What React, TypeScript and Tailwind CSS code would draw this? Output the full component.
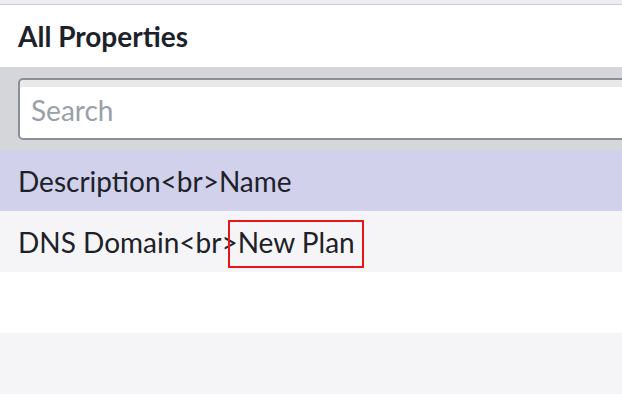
import React from 'react';

const rows = [
  { text: 'Description<br>Name', selected: true },
  { text: 'DNS Domain<br>', highlight: 'New Plan' },
  { text: '' },
  { text: '' },
];

export default function App() {
  return (
    <div
      className="w-[622px] h-[414px] overflow-hidden bg-white text-[#1d2129]"
      style={{ fontFamily: 'Lato, "Noto Sans", sans-serif' }}
    >
      <div className="h-[4px] bg-[#eeeef2] border-b border-[#c9ccd2] box-content" />
      <div className="h-[62px] flex items-center px-[18px]">
        <h2 className="text-[28px] leading-[34px] font-bold">All Properties</h2>
      </div>
      <div className="bg-[#d5d6da] pl-[18px] pt-[11px] pb-[10px]">
        <div className="h-[62px] -mr-[10px] bg-white border-2 border-[#8a9099] rounded-[5px] shadow-[inset_0_7px_0_#e9e9ec] flex items-center px-[11px]">
          <span className="text-[28px] leading-[34px] text-[#9aa0a8] pt-[2px]">Search</span>
        </div>
      </div>
      {rows.map((row, i) => (
        <div
          key={i}
          className={`h-[61px] flex items-center px-[18px] text-[28px] leading-[28px] ${
            row.selected ? 'bg-[#d1d1eb]' : i % 2 === 1 ? 'bg-[#f5f5f7]' : 'bg-white'
          }`}
        >
          <span>{row.text}</span>
          {row.highlight && (
            <span className="relative">
              {row.highlight}
              <span className="absolute -left-[10px] -right-[9px] -top-[8px] -bottom-[12px] border-2 border-[#e8141b]" />
            </span>
          )}
        </div>
      ))}
    </div>
  );
}
